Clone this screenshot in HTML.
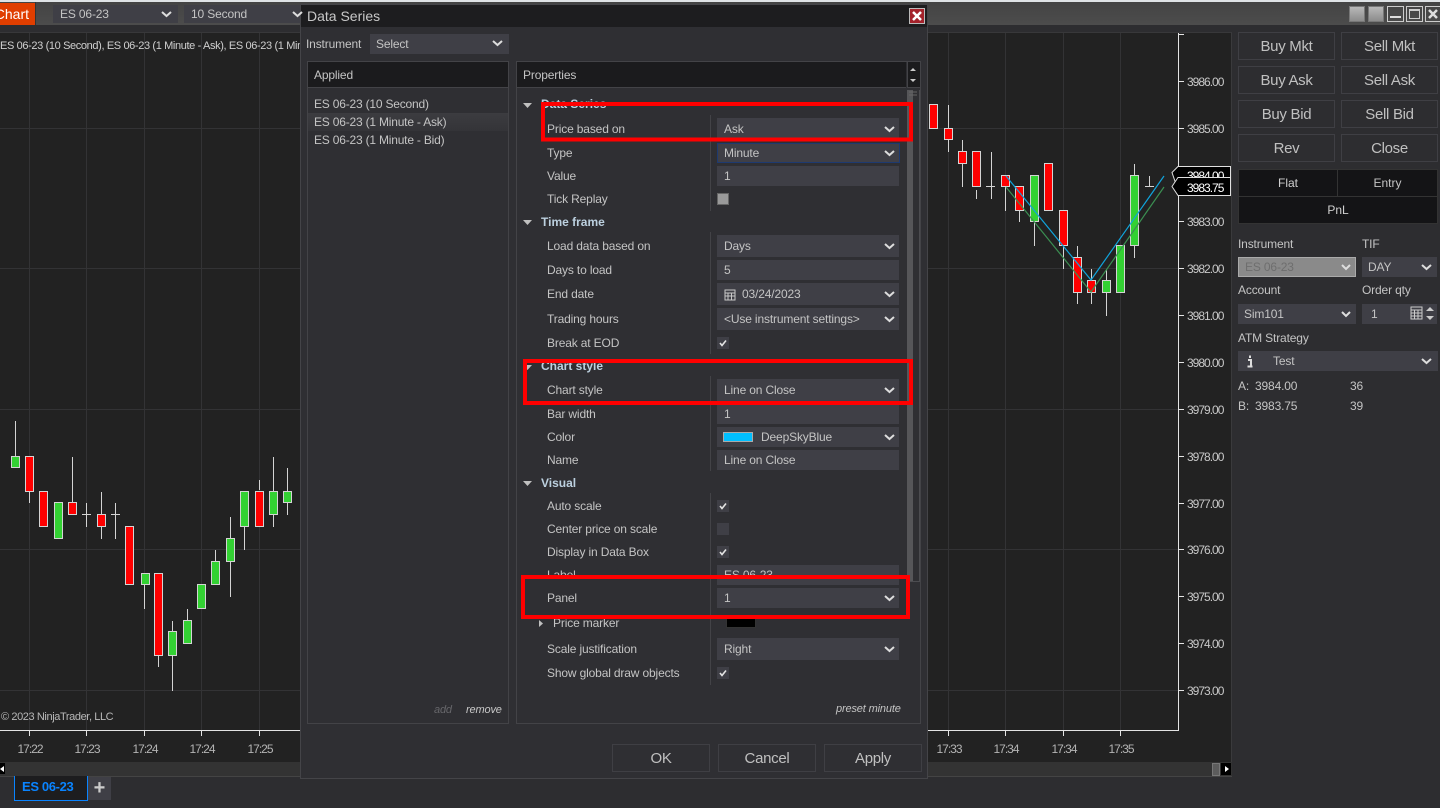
<!DOCTYPE html>
<html lang="en"><head><meta charset="utf-8"><title>Data Series</title>
<style>
html,body{margin:0;padding:0;width:1440px;height:808px;overflow:hidden;background:#2d2d30;font-family:"Liberation Sans",sans-serif;font-size:12px;color:#c8c8c8}
div{box-sizing:border-box}
.a,.t,.b,.i{position:absolute}
.t{white-space:nowrap;line-height:16px;color:#c4c4c4;letter-spacing:-.15px}
.b{border:1px solid #3f3f44;font-size:15px;letter-spacing:-.3px;color:#c0c0c0;text-align:center;line-height:27px}
.i{background:#3f3f46;color:#c4c4c4;line-height:20px;padding-left:7px;white-space:nowrap;left:717px;width:182px;letter-spacing:-.15px}
.h{font-weight:bold;color:#bcd0df;letter-spacing:0}
svg{position:absolute;left:0;top:0}
svg text{font-family:"Liberation Sans",sans-serif}
.cb{position:absolute;left:717px;width:12px;height:12px;background:#3f3f46}
</style></head><body>

<!-- top strip -->
<div class="a" style="left:0;top:0;width:1440px;height:2px;background:#dfe3e6"></div>
<div class="a" style="left:0;top:2px;width:1440px;height:23px;background:linear-gradient(#444,#4c4c4c)"></div>
<div class="a" style="left:0;top:3px;width:35px;height:22px;background:#e03e00;overflow:hidden"><div class="a" style="right:6px;top:0;color:#fff;font-size:14px;line-height:22px;white-space:nowrap">Chart</div></div>
<div class="a" style="left:35px;top:2px;width:1px;height:23px;background:#333"></div>
<div class="i" style="left:53px;top:5px;width:125px;height:18px;line-height:18px">ES 06-23</div>
<div class="i" style="left:184px;top:5px;width:118px;height:18px;line-height:18px">10 Second</div>

<!-- chart -->
<div class="a" style="left:0;top:32px;width:1232px;height:730px;background:#222;border-top:1px solid #38383a;border-right:1px solid #3a3a3c"></div>
<svg width="1440" height="808" viewBox="0 0 1440 808">
<g stroke="#333335" stroke-width="1" shape-rendering="crispEdges" fill="none">
<path d="M0 128.500H1178M0 268.500H1178M0 409.500H1178M0 549.500H1178M0 690.500H1178"/>
<path d="M29.500 33V730M86.500 33V730M144.500 33V730M201.500 33V730M259.500 33V730M948.500 33V730M1005.500 33V730M1063.500 33V730M1120.500 33V730"/>
</g>
<g stroke="#e4e4e4" stroke-width="1" shape-rendering="crispEdges" fill="none">
<path d="M1178.500 33V730.500H0"/>
<path d="M1179 34.500H1184M1179 81.500H1184M1179 128.500H1184M1179 221.500H1184M1179 268.500H1184M1179 315.500H1184M1179 362.500H1184M1179 409.500H1184M1179 456.500H1184M1179 503.500H1184M1179 549.500H1184M1179 596.500H1184M1179 643.500H1184M1179 690.500H1184"/>
<path d="M29.500 731V736M86.500 731V736M144.500 731V736M201.500 731V736M259.500 731V736M948.500 731V736M1005.500 731V736M1063.500 731V736M1120.500 731V736"/>
</g>
<!-- wicks -->
<g stroke="#d4d4d4" stroke-width="1" shape-rendering="crispEdges" fill="none">
<path d="M15.500 421V457M29.500 491V503M72.500 457V502M101.500 492V539M115.500 503V539M144.500 573V609M158.500 655V667M172.500 621V691M187.500 609V621M215.500 550V561M230.500 550V597M230.500 517V562M244.500 527V550M259.500 480V490M273.500 457V527M287.500 468V515"/>
<path d="M82 514.500H91M111 514.500H120M86.500 503V527"/>
<path d="M948.500 105V152M962.500 140V187M976.500 190V199M991.500 152V199M986 186.500H995M1005.500 186V211M1019.500 210V222M1034.500 221V246M1063.500 245V269M1077.500 246V304M1091.500 269V304M1106.500 269V316M1134.500 164V258M1149.500 176V186M1145 186.500H1154"/>
</g>
<!-- bodies -->
<g stroke="#d4d4d4" stroke-width="1" shape-rendering="crispEdges">
<g fill="#33d133">
<rect x="11.500" y="456.500" width="8" height="11"/><rect x="54.500" y="502.500" width="8" height="36"/><rect x="141.500" y="573.500" width="8" height="11"/><rect x="168.500" y="631.500" width="8" height="24"/><rect x="183.500" y="620.500" width="8" height="23"/><rect x="197.500" y="584.500" width="8" height="24"/><rect x="211.500" y="561.500" width="8" height="23"/><rect x="226.500" y="538.500" width="8" height="23"/><rect x="240.500" y="491.500" width="8" height="35"/><rect x="269.500" y="491.500" width="8" height="23"/><rect x="283.500" y="491.500" width="8" height="11"/>
<rect x="1030.500" y="175.500" width="8" height="46"/><rect x="1102.500" y="280.500" width="8" height="12"/><rect x="1116.500" y="245.500" width="8" height="47"/><rect x="1130.500" y="175.500" width="8" height="70"/>
</g>
<g fill="#ff0000">
<rect x="25.500" y="456.500" width="8" height="35"/><rect x="39.500" y="491.500" width="8" height="35"/><rect x="68.500" y="502.500" width="8" height="12"/><rect x="97.500" y="514.500" width="8" height="12"/><rect x="125.500" y="526.500" width="8" height="58"/><rect x="154.500" y="573.500" width="8" height="82"/><rect x="255.500" y="491.500" width="8" height="35"/>
<rect x="929.500" y="104.500" width="8" height="24"/><rect x="944.500" y="128.500" width="8" height="11"/><rect x="958.500" y="151.500" width="8" height="12"/><rect x="972.500" y="151.500" width="8" height="35"/><rect x="1001.500" y="175.500" width="8" height="11"/><rect x="1015.500" y="186.500" width="8" height="24"/><rect x="1044.500" y="163.500" width="8" height="47"/><rect x="1059.500" y="210.500" width="8" height="35"/><rect x="1073.500" y="257.500" width="8" height="35"/><rect x="1087.500" y="280.500" width="8" height="12"/>
</g>
</g>
<path d="M1006 176L1091 280L1164 176" fill="none" stroke="#10a4dc" stroke-width="1.200"/>
<path d="M1006 187L1091 292L1164 187" fill="none" stroke="#3b8f52" stroke-width="1.200"/>
<!-- price labels -->
<g fill="#c8c8c8" font-size="12" letter-spacing="-1">
<text x="1187" y="86">3986.00</text><text x="1187" y="133">3985.00</text><text x="1187" y="226">3983.00</text><text x="1187" y="273">3982.00</text><text x="1187" y="320">3981.00</text><text x="1187" y="367">3980.00</text><text x="1187" y="414">3979.00</text><text x="1187" y="461">3978.00</text><text x="1187" y="508">3977.00</text><text x="1187" y="554">3976.00</text><text x="1187" y="601">3975.00</text><text x="1187" y="648">3974.00</text><text x="1187" y="695">3973.00</text>
<g fill="#b4b4b4" text-anchor="middle">
<text x="30" y="753">17:22</text><text x="87" y="753">17:23</text><text x="145" y="753">17:24</text><text x="202" y="753">17:24</text><text x="260" y="753">17:25</text><text x="949" y="753">17:33</text><text x="1006" y="753">17:34</text><text x="1064" y="753">17:34</text><text x="1121" y="753">17:35</text>
</g>
</g>
<text x="0" y="49" fill="#d0d0d0" font-size="11" letter-spacing="-.37">ES 06-23 (10 Second), ES 06-23 (1 Minute - Ask), ES 06-23 (1 Minute - Bid)</text>
<text x="1" y="720" fill="#b8b8b8" font-size="11" letter-spacing="-.4">© 2023 NinjaTrader, LLC</text>
<path d="M1172 172.500L1178 166.500H1230.500V190H1178Z" fill="#000" stroke="#e0e0e0"/>
<text x="1187" y="180" fill="#fff" font-size="12" letter-spacing="-1">3984.00</text>
<path d="M1172 186.500L1178 177.500H1230.500V195.500H1178Z" fill="#000" stroke="#e0e0e0"/>
<text x="1187" y="192" fill="#fff" font-size="12" letter-spacing="-1">3983.75</text>
</svg>

<!-- scroll bar -->
<div class="a" style="left:0;top:762px;width:1232px;height:15px;background:#333;border-bottom:1px solid #444"></div>
<div class="a" style="left:0;top:763px;width:5px;height:11px;background:#000"></div>
<div class="a" style="left:1212px;top:763px;width:8px;height:13px;background:#5c5c5c;border:1px solid #777"></div>
<div class="a" style="left:1221px;top:763px;width:10px;height:12px;background:#000"></div>
<svg width="1440" height="808"><path d="M1225 766l4 3-4 3zM0 769l4-3v6z" fill="#fff"/></svg>

<!-- tab -->
<div class="a" style="left:14px;top:776px;width:74px;height:25px;background:#1d1d1f;border:1px solid #0a84ff;border-top:0;color:#0a84ff;font-weight:bold;font-size:13px;letter-spacing:-.35px;line-height:21px;padding-left:7px">ES 06-23</div>
<div class="a" style="left:88px;top:777px;width:23px;height:23px;background:#3f3f46;color:#ccc;font-size:20px;line-height:23px;text-align:center;font-weight:bold">+</div>

<!-- window controls -->
<div class="a" style="left:1349px;top:6px;width:16px;height:16px;background:linear-gradient(#b8b8b8,#8c8c8c);border:1px solid #777"></div>
<div class="a" style="left:1368px;top:6px;width:16px;height:16px;background:linear-gradient(#b8b8b8,#8c8c8c);border:1px solid #777"></div>
<div class="a" style="left:1387px;top:6px;width:17px;height:16px;border:1px solid #ccc"></div>
<div class="a" style="left:1390px;top:16px;width:11px;height:2px;background:#ddd"></div>
<div class="a" style="left:1406px;top:6px;width:17px;height:16px;border:1px solid #ccc"></div>
<div class="a" style="left:1409px;top:9px;width:11px;height:10px;border:1px solid #ccc;border-top:2px solid #ccc"></div>
<div class="a" style="left:1425px;top:6px;width:15px;height:16px;border:1px solid #ccc;border-right:0"></div>
<svg width="1440" height="808"><path d="M1429 10l8 8m0-8l-8 8" stroke="#ddd" stroke-width="2.500" fill="none"/></svg>

<!-- right panel -->
<div class="a" style="left:1232px;top:25px;width:208px;height:783px;background:#2d2d30"></div>
<div class="b" style="left:1238px;top:32px;width:97px;height:28px">Buy Mkt</div>
<div class="b" style="left:1341px;top:32px;width:97px;height:28px">Sell Mkt</div>
<div class="b" style="left:1238px;top:66px;width:97px;height:28px">Buy Ask</div>
<div class="b" style="left:1341px;top:66px;width:97px;height:28px">Sell Ask</div>
<div class="b" style="left:1238px;top:100px;width:97px;height:28px">Buy Bid</div>
<div class="b" style="left:1341px;top:100px;width:97px;height:28px">Sell Bid</div>
<div class="b" style="left:1238px;top:134px;width:97px;height:28px">Rev</div>
<div class="b" style="left:1341px;top:134px;width:97px;height:28px">Close</div>
<div class="a" style="left:1238px;top:169px;width:100px;height:28px;background:#141416;border:1px solid #333;text-align:center;line-height:27px;color:#d0d0d0">Flat</div>
<div class="a" style="left:1337px;top:169px;width:101px;height:28px;background:#141416;border:1px solid #333;text-align:center;line-height:27px;color:#c4c4c4">Entry</div>
<div class="a" style="left:1238px;top:196px;width:200px;height:28px;background:#141416;border:1px solid #333;text-align:center;line-height:27px;color:#d0d0d0">PnL</div>

<div class="t" style="left:1238px;top:236px">Instrument</div>
<div class="t" style="left:1362px;top:236px">TIF</div>
<div class="i" style="left:1238px;top:257px;width:118px;height:20px;background:#8a8a8a;border:1px solid #aaa;color:#6e6e6e;padding-left:6px;line-height:18px">ES 06-23</div>
<div class="i" style="left:1362px;top:257px;width:75px;height:20px;padding-left:6px">DAY</div>
<div class="t" style="left:1238px;top:282px">Account</div>
<div class="t" style="left:1362px;top:282px">Order qty</div>
<div class="i" style="left:1238px;top:304px;width:118px;height:20px;padding-left:6px">Sim101</div>
<div class="i" style="left:1362px;top:304px;width:75px;height:20px;padding-left:9px">1</div>
<div class="t" style="left:1238px;top:330px">ATM Strategy</div>
<div class="i" style="left:1238px;top:351px;width:200px;height:20px;padding-left:35px">Test</div>
<div class="t" style="left:1238px;top:378px">A:</div><div class="t" style="left:1255px;top:378px">3984.00</div><div class="t" style="left:1350px;top:378px">36</div>
<div class="t" style="left:1238px;top:398px">B:</div><div class="t" style="left:1255px;top:398px">3983.75</div><div class="t" style="left:1350px;top:398px">39</div>
<svg width="1440" height="808">
<path d="M1342 265l4 4 4-4M1342 312l4 4 4-4" fill="none" stroke="#ddd" stroke-width="2"/>
<path d="M1422 265l4.500 4 4.500-4M1422 359l4.500 4 4.500-4" fill="none" stroke="#ddd" stroke-width="2"/>
<path d="M1250 355.500v2.500M1248 360h3v6.500M1247.500 366.500h5" fill="none" stroke="#ddd" stroke-width="2"/>
<path d="M1411 307h11v12h-11zM1411 310h11M1411 313h11M1411 316h11M1414.500 310v9M1418 310v9" fill="none" stroke="#ccc" stroke-width="1"/>
<path d="M1426 311l4-4 4 4zM1426 316l4 4 4-4z" fill="#ccc"/>
</svg>

<!-- dialog -->
<div class="a" style="left:300px;top:4px;width:628px;height:775px;background:#2f2f33;border:1px solid #444448"></div>
<div class="a" style="left:301px;top:5px;width:626px;height:22px;background:#1d1d1f"></div>
<div class="t" style="left:307px;top:8px;font-size:14px;letter-spacing:0;color:#c8c8c8">Data Series</div>
<div class="a" style="left:909px;top:8px;width:16px;height:16px;background:#a4222b;border:1px solid #bbb"></div>
<div class="t" style="left:306px;top:36px">Instrument</div>
<div class="i" style="left:370px;top:34px;width:139px;height:20px;padding-left:6px">Select</div>

<div class="a" style="left:307px;top:61px;width:202px;height:663px;border:1px solid #434347"></div>
<div class="a" style="left:308px;top:62px;width:200px;height:26px;background:#1b1b1d;border-bottom:1px solid #434347"></div>
<div class="t" style="left:314px;top:67px">Applied</div>
<div class="a" style="left:308px;top:113px;width:200px;height:18px;background:linear-gradient(#3c3c40,#343438)"></div>
<div class="t" style="left:314px;top:96px;letter-spacing:-.2px">ES 06-23 (10 Second)</div>
<div class="t" style="left:314px;top:114px;letter-spacing:-.2px">ES 06-23 (1 Minute - Ask)</div>
<div class="t" style="left:314px;top:132px;letter-spacing:-.2px">ES 06-23 (1 Minute - Bid)</div>
<div class="t" style="left:434px;top:702px;font-size:11px;font-style:italic;color:#66666a">add</div>
<div class="t" style="left:466px;top:702px;font-size:11px;font-style:italic;color:#c8c8c8">remove</div>

<div class="a" style="left:516px;top:61px;width:405px;height:663px;border:1px solid #434347"></div>
<div class="a" style="left:517px;top:62px;width:389px;height:26px;background:#1b1b1d;border-bottom:1px solid #434347"></div>
<div class="a" style="left:907px;top:62px;width:13px;height:26px;background:#1b1b1d;border-left:1px solid #434347;border-bottom:1px solid #434347"></div>
<div class="t" style="left:523px;top:67px">Properties</div>
<div class="a" style="left:907px;top:90px;width:6px;height:491px;background:#565659"></div>
<div class="a" style="left:919px;top:90px;width:1px;height:491px;background:#4c4c50"></div>
<div class="a" style="left:907px;top:581px;width:13px;height:1px;background:#4c4c50"></div>
<div class="a" style="left:710px;top:115px;width:1px;height:96px;background:#434347"></div>
<div class="a" style="left:710px;top:232px;width:1px;height:122px;background:#434347"></div>
<div class="a" style="left:710px;top:376px;width:1px;height:95px;background:#434347"></div>
<div class="a" style="left:710px;top:493px;width:1px;height:192px;background:#434347"></div>

<div class="t h" style="left:541px;top:96px">Data Series</div>
<div class="t" style="left:547px;top:121px">Price based on</div><div class="i" style="top:118px;height:22px;line-height:22px">Ask</div>
<div class="t" style="left:547px;top:145px">Type</div><div class="i" style="top:143px;height:20px;width:183px;line-height:18px;border:1px solid #1e3a70;padding-left:6px">Minute</div>
<div class="t" style="left:547px;top:168px">Value</div><div class="i" style="top:166px;height:20px">1</div>
<div class="t" style="left:547px;top:191px">Tick Replay</div><div class="cb" style="top:193px;background:#9a9a9a;border:1px solid #666"></div>
<div class="t h" style="left:541px;top:214px">Time frame</div>
<div class="t" style="left:547px;top:238px">Load data based on</div><div class="i" style="top:235px;height:22px;line-height:22px">Days</div>
<div class="t" style="left:547px;top:262px">Days to load</div><div class="i" style="top:260px;height:20px">5</div>
<div class="t" style="left:547px;top:286px">End date</div><div class="i" style="top:283px;height:22px;line-height:22px;padding-left:25px">03/24/2023</div>
<div class="t" style="left:547px;top:311px">Trading hours</div><div class="i" style="top:308px;height:22px;line-height:22px">&lt;Use instrument settings&gt;</div>
<div class="t" style="left:547px;top:335px">Break at EOD</div><div class="cb" style="top:337px"></div>
<div class="t h" style="left:541px;top:358px">Chart style</div>
<div class="t" style="left:547px;top:382px">Chart style</div><div class="i" style="top:379px;height:22px;line-height:22px">Line on Close</div>
<div class="t" style="left:547px;top:406px">Bar width</div><div class="i" style="top:404px;height:20px">1</div>
<div class="t" style="left:547px;top:429px">Color</div><div class="i" style="top:427px;height:20px;padding-left:44px">DeepSkyBlue</div>
<div class="a" style="left:723px;top:432px;width:30px;height:10px;background:#00bfff;border:1px solid #aaa"></div>
<div class="t" style="left:547px;top:452px">Name</div><div class="i" style="top:450px;height:20px">Line on Close</div>
<div class="t h" style="left:541px;top:475px">Visual</div>
<div class="t" style="left:547px;top:498px">Auto scale</div><div class="cb" style="top:500px"></div>
<div class="t" style="left:547px;top:521px">Center price on scale</div><div class="cb" style="top:523px"></div>
<div class="t" style="left:547px;top:544px">Display in Data Box</div><div class="cb" style="top:546px"></div>
<div class="t" style="left:547px;top:567px">Label</div><div class="i" style="top:565px;height:20px">ES 06-23</div>
<div class="t" style="left:547px;top:590px">Panel</div><div class="i" style="top:588px;height:20px">1</div>
<div class="t" style="left:553px;top:615px">Price marker</div>
<div class="a" style="left:726px;top:618px;width:30px;height:10px;background:#000;border:1px solid #333"></div>
<div class="t" style="left:547px;top:641px">Scale justification</div><div class="i" style="top:638px;height:22px;line-height:22px">Right</div>
<div class="t" style="left:547px;top:665px">Show global draw objects</div><div class="cb" style="top:667px"></div>
<div class="t" style="left:836px;top:701px;font-size:11px;font-style:italic;color:#c4c4c4">preset minute</div>

<div class="b" style="left:612px;top:744px;width:98px;height:28px;line-height:28px">OK</div>
<div class="b" style="left:718px;top:744px;width:98px;height:28px;line-height:28px">Cancel</div>
<div class="b" style="left:824px;top:744px;width:98px;height:28px;line-height:28px">Apply</div>

<svg width="1440" height="808">
<!-- close x -->
<path d="M913 12l8 8m0-8l-8 8" stroke="#fff" stroke-width="2.500" fill="none"/>
<!-- chevrons -->
<g fill="none" stroke="#ddd" stroke-width="2">
<path d="M493 41l4.500 4 4.500-4M162 12l4.500 4 4.500-4M293 12l4.500 4 4.500-4"/>
<path d="M885 127l4.500 4 4.500-4M885 151l4.500 4 4.500-4M885 244l4.500 4 4.500-4M885 292l4.500 4 4.500-4M885 317l4.500 4 4.500-4M885 388l4.500 4 4.500-4M885 435l4.500 4 4.500-4M885 596l4.500 4 4.500-4M885 647l4.500 4 4.500-4"/>
</g>
<!-- scroll arrows -->
<path d="M910 71l3-3 3 3zM910 79l3 3 3-3z" fill="#ccc"/>
<path d="M909 92h8M909 95h8" stroke="#666" stroke-width="1" fill="none"/>
<!-- expander triangles -->
<path d="M523 103h9l-4.500 5zM523 220h9l-4.500 5zM523 365l4-4v4h5l-4.500 5zM523 481h9l-4.500 5z" fill="#c0c0c0"/>
<path d="M539 620l4 3.500-4 3.500z" fill="#c0c0c0"/>
<!-- check marks -->
<g fill="none" stroke="#e4e4e4" stroke-width="1.600">
<path d="M720 343l2 2.500 4-5M720 506l2 2.500 4-5M720 552l2 2.500 4-5M720 673l2 2.500 4-5"/>
</g>
<!-- calendar -->
<path d="M725 290h10v10h-10zM725 293h10M725 296h10M728 293v7M731.500 293v7" fill="none" stroke="#c8c8c8" stroke-width="1"/>
<!-- red annotation boxes -->
<g fill="none" stroke="#f00" stroke-width="4">
<rect x="543" y="104" width="368" height="35.500"/>
<rect x="525" y="361" width="386" height="42"/>
<rect x="523" y="577" width="385" height="40"/>
</g>
</svg>
</body></html>
